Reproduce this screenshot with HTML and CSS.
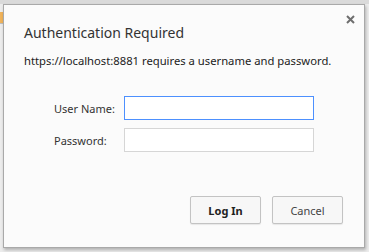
FILE: index.html
```html
<!DOCTYPE html>
<html>

<head>
    <link rel="stylesheet" href="styles.css">
</head>

<body>
    <section class="page">
        <div class="page-tab"></div>
        <section class="dialog">
            <button class="close" aria-label="Close">
                <svg width="9" height="9" viewBox="0 0 9 9">
                    <path d="M1 1 L8 8 M8 1 L1 8" stroke="#6e6e6e" stroke-width="2"></path>
                </svg>
            </button>
            <h1 class="title">Authentication Required</h1>
            <p class="message">https://localhost:8881 requires a username and password.</p>
            <form class="fields">
                <label for="user">User Name:</label>
                <input id="user" class="field focused" type="text">
                <label for="pass">Password:</label>
                <input id="pass" class="field" type="password">
            </form>
            <section class="buttons">
                <button class="btn primary">Log In</button>
                <button class="btn">Cancel</button>
            </section>
        </section>
    </section>
</body>
</html>
```

FILE: styles.css
```css
html,
body {
    margin: 0;
    height: 100%;
    background: #f2f2f2;
}

.page {
    position: relative;
    height: 252px;
    padding: 4px 4px 0 3px;
    box-sizing: border-box;
    background: linear-gradient(#dadada, #dadada) 0 0 / 100% 4px no-repeat, #ececec;
}

.page-tab {
    position: absolute;
    left: 0;
    top: 12px;
    width: 3px;
    height: 11px;
    background: #f0b35a;
    border-bottom: 1px solid #bdbdbd;
}

.dialog {
    position: relative;
    width: 362px;
    height: 244px;
    box-sizing: border-box;
    background: #fbfbfb;
    border: 1px solid #a9a9a9;
    box-shadow: 1px 2px 3px rgba(0, 0, 0, 0.25);
    font-family: "Noto Sans", sans-serif;
    color: #222;
    display: flex;
    flex-direction: column;
}

.close {
    position: absolute;
    top: 10px;
    right: 9px;
    padding: 0;
    border: 0;
    background: none;
    line-height: 0;
}

.title {
    margin: 17px 0 0 20px;
    font-size: 14px;
    font-weight: normal;
    line-height: 22px;
    color: #333;
}

.message {
    margin: 9px 0 0 20px;
    font-size: 11.25px;
    line-height: 16px;
    color: #222;
}

.fields {
    margin: 27px 0 0 50px;
    display: grid;
    grid-template-columns: 70px 190px;
    row-gap: 8px;
    align-items: center;
    font-size: 11px;
    color: #333;
}

.field {
    height: 24px;
    margin: 0;
    box-sizing: border-box;
    border: 1px solid #d6d6d6;
    background: #fff;
    outline: none;
}

.field.focused {
    border-color: #4d90fe;
}

.buttons {
    margin: auto 21px 23px 0;
    display: flex;
    justify-content: flex-end;
    gap: 11px;
}

.btn {
    width: 71px;
    height: 28px;
    padding: 0;
    border: 1px solid #c3c3c3;
    border-radius: 2px;
    background: #f7f7f7;
    box-shadow: 0 1px 1px rgba(0, 0, 0, 0.08);
    font-family: "Noto Sans", sans-serif;
    font-size: 11px;
    color: #444;
}

.btn.primary {
    font-weight: bold;
    color: #222;
}
```
